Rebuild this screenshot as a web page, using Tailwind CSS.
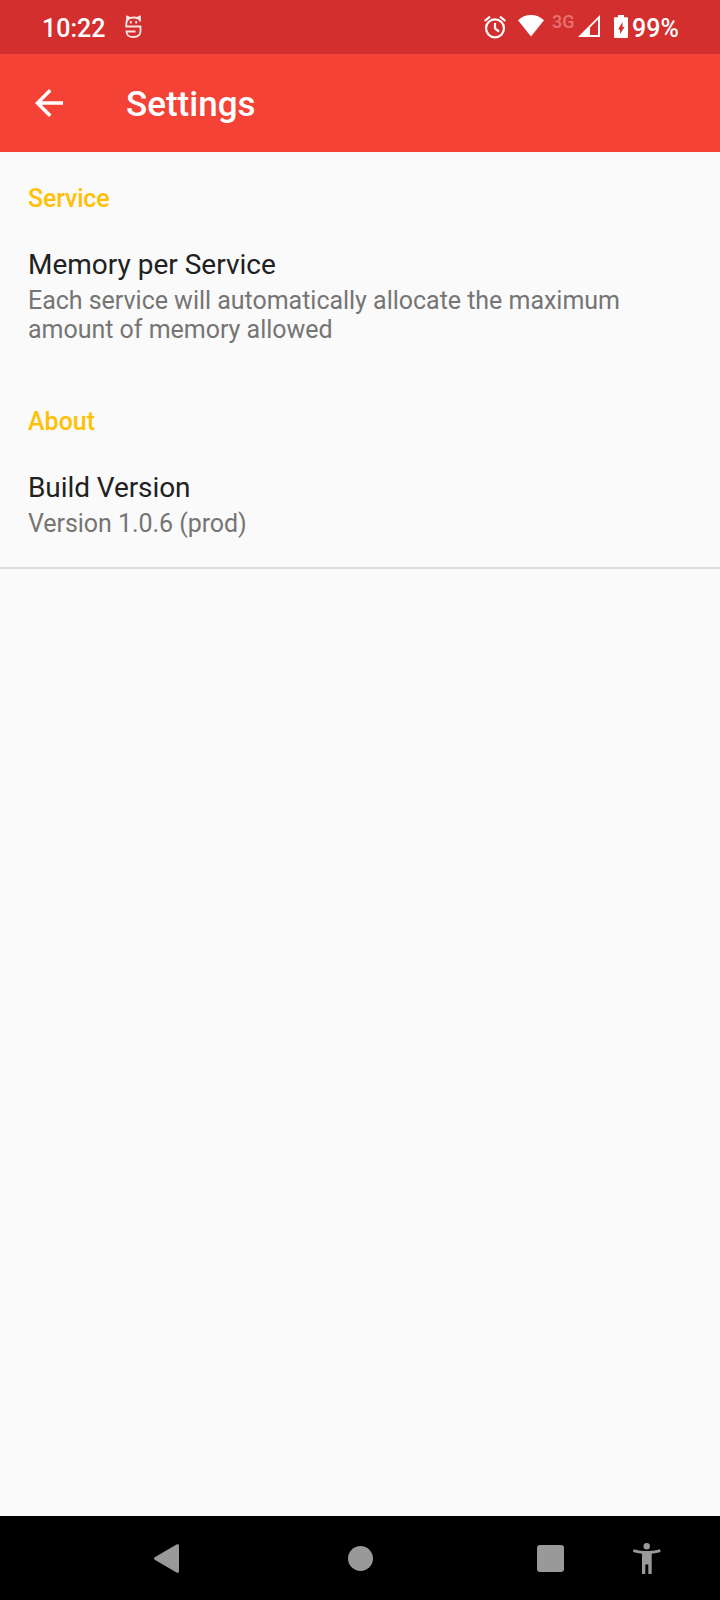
<!DOCTYPE html>
<html lang="en">
<head>
<meta charset="utf-8">
<title>Settings</title>
<script src="https://cdn.jsdelivr.net/npm/@tailwindcss/browser@4"></script>
</head>
<body class="flex h-[1600px] w-[720px] flex-col overflow-hidden bg-[#fafafa] font-['Roboto',sans-serif] text-[25px] leading-[29px]">
  <!-- Status bar -->
  <header class="flex h-[54px] shrink-0 items-start bg-[#d32f2f] pl-[42px] text-white">
    <span class="mt-[14px] w-[64px] font-medium whitespace-nowrap">10:22</span>
    <svg class="mt-[15px] ml-[19px]" width="17" height="24" viewBox="0 0 17 24" fill="none" stroke="#fbe3e3" stroke-width="1.800">
      <path d="M15.300 6.500Q14.500 2.500 8.500 2.500Q1.300 2.500 1.300 9V11.500H15.500V16Q15.500 22 8.500 22Q1.500 22 1.500 16.500H10.500"/>
      <path d="M2 5.500V1.500L5 2.800M15 5.500V1.500L12 2.800M5.800 6V8.500M11.200 6V8.500"/>
    </svg>
    <svg class="mt-[15px] ml-[341px]" width="24" height="24" viewBox="0 0 24 24" fill="none" stroke="#fff" stroke-width="2.200">
      <circle cx="12" cy="13.300" r="9"/>
      <path d="M1.700 6L7 1.600M22.300 6L17 1.600M12 8V13.500L16 16.500"/>
    </svg>
    <svg class="mt-[15px] ml-[11px]" width="26" height="22" viewBox="0 0 26 22" fill="#fff"><path d="M0 5.300Q5.500 0 13 0T26 5.300L13 21.500Z"/></svg>
    <span class="mt-[11px] ml-[8px] w-[24px] text-[18px] leading-[21px] font-medium text-[#e57373]">3G</span>
    <svg class="mt-[15px] ml-[2px]" width="23" height="23" viewBox="0 0 23 23"><path d="M0 22L22 0V22Z" fill="#fff"/><path d="M12 12.500L20 4.500V20H12Z" fill="#d32f2f"/></svg>
    <svg class="mt-[15px] ml-[13px]" width="14" height="23" viewBox="0 0 14 23"><path d="M4 0H10V2.200H13Q14 2.200 14 3.200V22Q14 23 13 23H1Q0 23 0 22V3.200Q0 2.200 1 2.200H4Z" fill="#fff"/><path d="M8.500 7V12H10.500L6 19V14.500H4Z" fill="#d32f2f"/></svg>
    <span class="mt-[14px] ml-[4px] font-medium">99%</span>
  </header>

  <!-- App bar -->
  <div class="flex h-[98px] shrink-0 items-start bg-[#f44336] text-white">
    <svg class="mt-[35px] ml-[35px]" width="28" height="28" viewBox="4 4 16 16" fill="#fff"><path d="M20 11H7.830l5.590-5.590L12 4l-8 8 8 8 1.410-1.410L7.830 13H20z"/></svg>
    <h1 class="mt-[30px] ml-[63px] text-[35px] leading-[41px] font-medium">Settings</h1>
  </div>

  <!-- Preferences -->
  <main class="flex grow flex-col">
    <section class="px-7 pt-8">
      <h2 class="font-medium tracking-[-0.2px] text-[#ffc107]">Service</h2>
      <div class="pt-[35px]">
        <h3 class="text-[28px] leading-[33px] text-[#212121]">Memory per Service</h3>
        <p class="pt-[5px] tracking-[-0.025px] text-[#757575]">Each service will automatically allocate the maximum<br>amount of memory allowed</p>
      </div>
    </section>
    <section class="border-b-2 border-[#dadada] px-7 pt-[63px] pb-[29px]">
      <h2 class="font-medium text-[#ffc107]">About</h2>
      <div class="pt-[35px]">
        <h3 class="text-[28px] leading-[33px] tracking-[-0.08px] text-[#212121]">Build Version</h3>
        <p class="pt-[5px] tracking-[-0.05px] text-[#757575]">Version 1.0.6 (prod)</p>
      </div>
    </section>
  </main>

  <!-- Navigation bar -->
  <nav class="flex h-[84px] shrink-0 items-start bg-black">
    <svg class="mt-[28px] ml-[154px]" width="25" height="29" viewBox="0 0 25 29" fill="#999"><path d="M.7 13.300L22.500 .4Q25 -.4 25 1.500V27.500Q25 29.400 22.500 28.600L.7 15.700Q-.6 14.500 .7 13.300Z"/></svg>
    <div class="mt-[30px] ml-[169px] size-[25px] rounded-full bg-[#999]"></div>
    <div class="mt-[29px] ml-[164px] size-[27px] rounded-[3px] bg-[#999]"></div>
    <svg class="mt-[27px] ml-[69px]" width="28" height="31" viewBox="0 0 28 31" fill="#999"><circle cx="13.700" cy="3.300" r="3.200"/><path d="M.6 6.200Q13.700 10 27 6.200L27.600 9Q23.500 10.200 18.700 10.700V31H15.300V21.500H12.300V31H9V10.700Q4.200 10.200 0 9Z"/></svg>
  </nav>
</body>
</html>
